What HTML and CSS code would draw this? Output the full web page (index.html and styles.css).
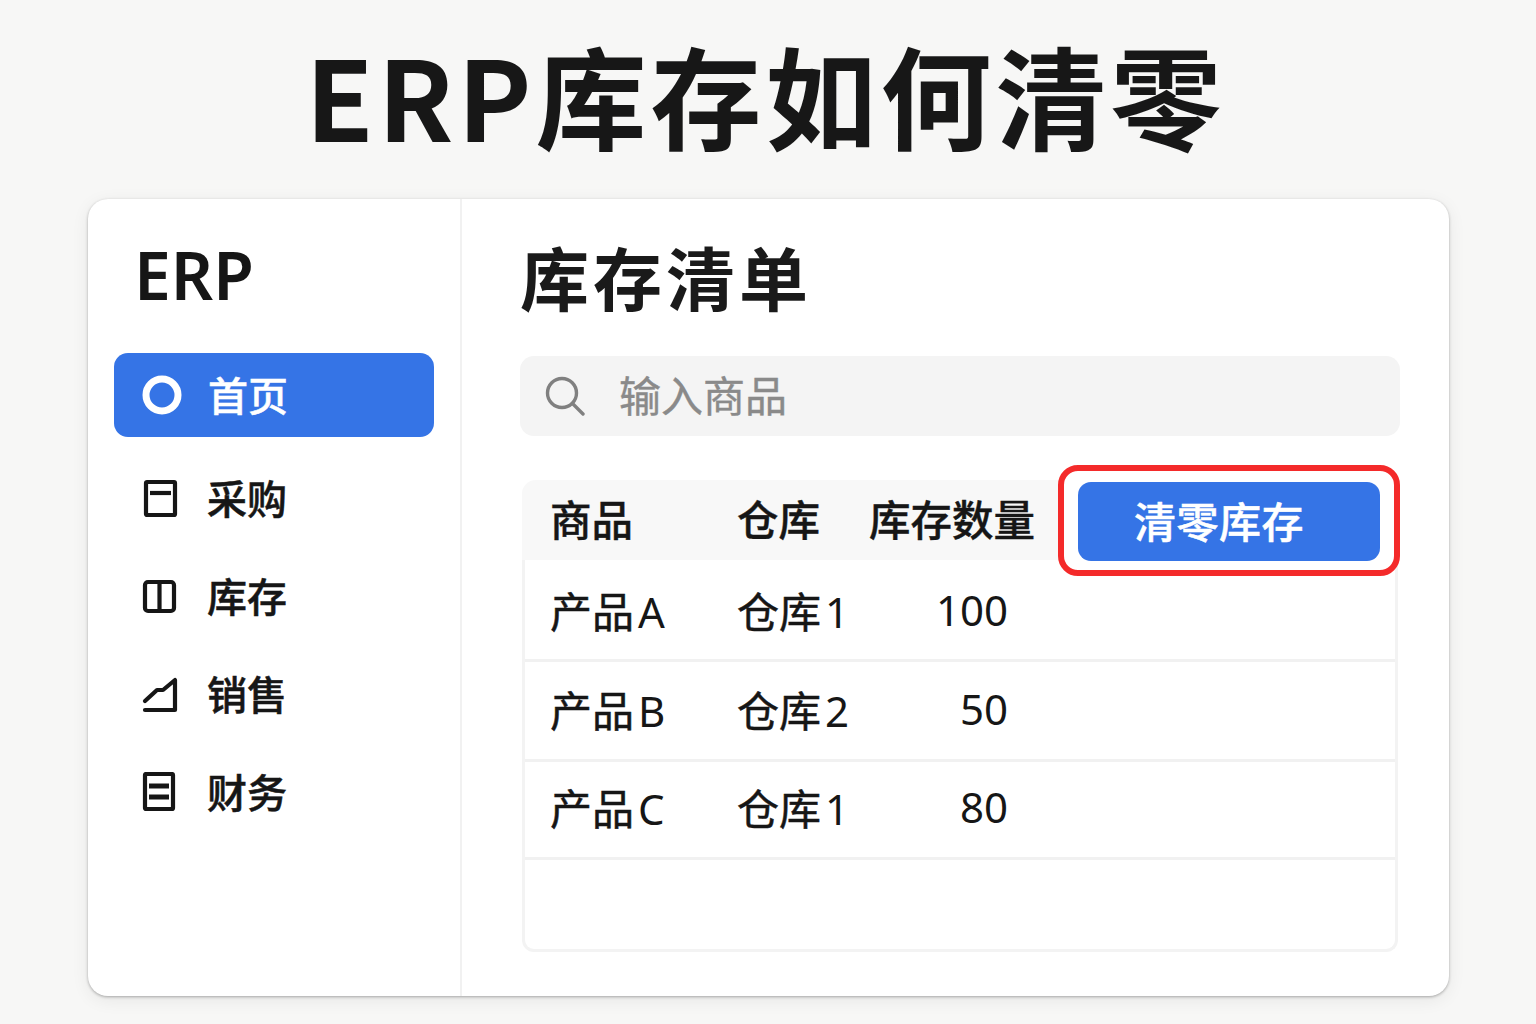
FILE: index.html
```html
<!DOCTYPE html>
<html lang="zh-CN">
<head>
<meta charset="utf-8">
<title>ERP库存如何清零</title>
<link rel="stylesheet" href="styles.css">
</head>
<body>
<h1 class="headline">ERP库存如何清零</h1>
<div class="card">
  <aside class="sidebar">
    <div class="brand">ERP</div>
    <nav class="nav">
      <a class="nav-item active">
        <svg class="nav-icon" viewBox="0 0 40 40"><circle cx="20" cy="20" r="16" fill="none" stroke="#fff" stroke-width="7"/></svg>
        <span>首页</span>
      </a>
      <a class="nav-item">
        <svg class="nav-icon" viewBox="0 0 40 40"><g fill="none" stroke="#161616" stroke-width="4.2" stroke-linejoin="round"><rect x="6" y="4" width="29" height="33" rx="1"/><path d="M10 15h21"/></g></svg>
        <span>采购</span>
      </a>
      <a class="nav-item">
        <svg class="nav-icon" viewBox="0 0 40 40"><g fill="none" stroke="#161616" stroke-width="4.2" stroke-linejoin="round"><rect x="5" y="6" width="29" height="29" rx="3"/><path d="M19.5 6v29"/></g></svg>
        <span>库存</span>
      </a>
      <a class="nav-item">
        <svg class="nav-icon" viewBox="0 0 40 40"><path d="M5 27l12-11h6l12-10v30H5" fill="none" stroke="#161616" stroke-width="4.2" stroke-linejoin="round" stroke-linecap="round"/></svg>
        <span>销售</span>
      </a>
      <a class="nav-item">
        <svg class="nav-icon" viewBox="0 0 40 40"><g fill="none" stroke="#161616" stroke-width="4.2"><rect x="5" y="2" width="28" height="35" rx="1"/><path d="M9 14h20" stroke-width="5"/><path d="M9 25h20" stroke-width="5"/></g></svg>
        <span>财务</span>
      </a>
    </nav>
  </aside>
  <main class="main">
    <h2 class="page-title">库存清单</h2>
    <div class="search">
      <svg class="search-icon" viewBox="0 0 40 40"><g fill="none" stroke="#808080" stroke-width="3.4" stroke-linecap="round"><circle cx="17" cy="17" r="14.5"/><path d="M27.5 27.5L38 38"/></g></svg>
      <span class="search-text">输入商品</span>
    </div>
    <div class="table-wrap">
      <div class="table-head">
        <div class="col-a">商品</div>
        <div class="col-b">仓库</div>
        <div class="col-c">库存数量</div>
      </div>
      <div class="table-body">
        <div class="row r1"><div class="col-a">产品<span class="latin">A</span></div><div class="col-b">仓库<span class="latin">1</span></div><div class="col-n">100</div></div>
        <div class="row r2"><div class="col-a">产品<span class="latin">B</span></div><div class="col-b">仓库<span class="latin">2</span></div><div class="col-n">50</div></div>
        <div class="row r3"><div class="col-a">产品<span class="latin">C</span></div><div class="col-b">仓库<span class="latin">1</span></div><div class="col-n">80</div></div>
        <div class="row r4"></div>
      </div>
      <div class="highlight"><button class="clear-btn">清零库存</button></div>
    </div>
  </main>
</div>
</body>
</html>
```

FILE: styles.css
```css
* { box-sizing: border-box; }
html, body { margin: 0; height: 1024px; overflow: hidden; }
body {
  background: #f7f7f6;
  font-family: "Noto Sans CJK SC", "Noto Sans", sans-serif;
  color: #161616;
  display: flex;
  flex-direction: column;
  align-items: center;
}
.headline {
  margin: 0 5px 0 0;
  height: 199px;
  padding-top: 13px;
  font-size: 111px;
  line-height: 161px;
  font-weight: 700;
  letter-spacing: 4px;
  color: #171717;
  white-space: nowrap;
}
.card {
  width: 1361px;
  height: 797px;
  margin-left: 1px;
  background: #fff;
  border-radius: 20px;
  box-shadow: 0 1px 3px rgba(0,0,0,.3), 0 4px 18px rgba(0,0,0,.07);
  display: flex;
}
.sidebar {
  width: 374px;
  flex: none;
  border-right: 2px solid #f1f1f1;
  padding: 0 26px;
}
.brand {
  height: 154px;
  padding: 36px 0 0 20px;
  font-family: "Noto Sans", sans-serif;
  font-size: 66px;
  line-height: 78px;
  font-weight: 600;
}
.nav { display: flex; flex-direction: column; }
.nav-item {
  height: 98px;
  display: flex;
  align-items: center;
  gap: 27px;
  padding: 0 0 5px 26px;
  font-size: 40px;
  font-weight: 500;
  -webkit-text-stroke: .5px currentColor;
  color: #161616;
  line-height: 1;
}
.nav-icon { width: 40px; height: 40px; flex: none; }
.nav-item span { margin-top: -2px; }
.active {
  height: 84px;
  margin-bottom: 14px;
  padding: 0 0 0 28px;
  gap: 26px;
  background: #3574e6;
  border-radius: 14px;
  color: #fff;
}
.main {
  flex: 1;
  min-width: 0;
  padding: 34px 49px 0 58px;
}
.page-title {
  margin: 0;
  height: 123px;
  font-size: 69px;
  line-height: 86px;
  font-weight: 700;
  letter-spacing: 4px;
  color: #1a1a1a;
}
.search {
  height: 80px;
  background: #f4f4f4;
  border-radius: 14px;
  display: flex;
  align-items: center;
  gap: 34px;
  padding-left: 25px;
  font-size: 42px;
  color: #8a8a8a;
}
.search-icon { width: 40px; height: 40px; flex: none; }
.search-text { margin-top: -6px; -webkit-text-stroke: .4px currentColor; }
.table-wrap {
  position: relative;
  margin: 44px 2px 0;
  height: 472px;
}
.table-head {
  height: 80px;
  background: #f8f8f8;
  border-radius: 14px 0 0 0;
  display: flex;
  align-items: center;
  padding: 0 0 4px 28px;
  font-size: 41.5px;
  font-weight: 500;
  -webkit-text-stroke: .4px currentColor;
  white-space: nowrap;
}
.col-a { width: 187px; flex: none; }
.col-b { width: 132px; flex: none; }
.col-n {
  width: 139px;
  flex: none;
  text-align: right;
  font-family: "Noto Sans", sans-serif;
  font-weight: 400;
  -webkit-text-stroke: 0;
}
.table-body {
  height: 392px;
  border: 3px solid #f3f3f3;
  border-top: 0;
  border-radius: 0 0 12px 12px;
  display: flex;
  flex-direction: column;
}
.row {
  height: 100px;
  flex: none;
  display: flex;
  align-items: center;
  padding-left: 25px;
  border-bottom: 3px solid #f1f1f1;
  font-size: 42px;
  -webkit-text-stroke: .5px currentColor;
  white-space: nowrap;
}
.r1 { height: 102px; }
.r2 { padding-bottom: 4px; }
.r3 { height: 98px; padding-bottom: 6px; }
.r4 { height: 90px; border-bottom: 0; }
.latin {
  font-family: "Noto Sans", sans-serif;
  margin-left: 4px;
  -webkit-text-stroke: 0;
}
.highlight {
  position: absolute;
  top: -15px;
  right: -2px;
  width: 342px;
  height: 111px;
  border: 6px solid #f42a2a;
  border-radius: 20px;
  background: #fff;
  display: flex;
  align-items: center;
  justify-content: center;
}
.clear-btn {
  width: 302px;
  height: 79px;
  margin-top: 2px;
  border: 0;
  border-radius: 13px;
  background: #3574e6;
  color: #fff;
  font-family: inherit;
  font-size: 42px;
  font-weight: 500;
  -webkit-text-stroke: .5px currentColor;
  letter-spacing: .5px;
  padding: 0 20px 4px 0;
}
```
